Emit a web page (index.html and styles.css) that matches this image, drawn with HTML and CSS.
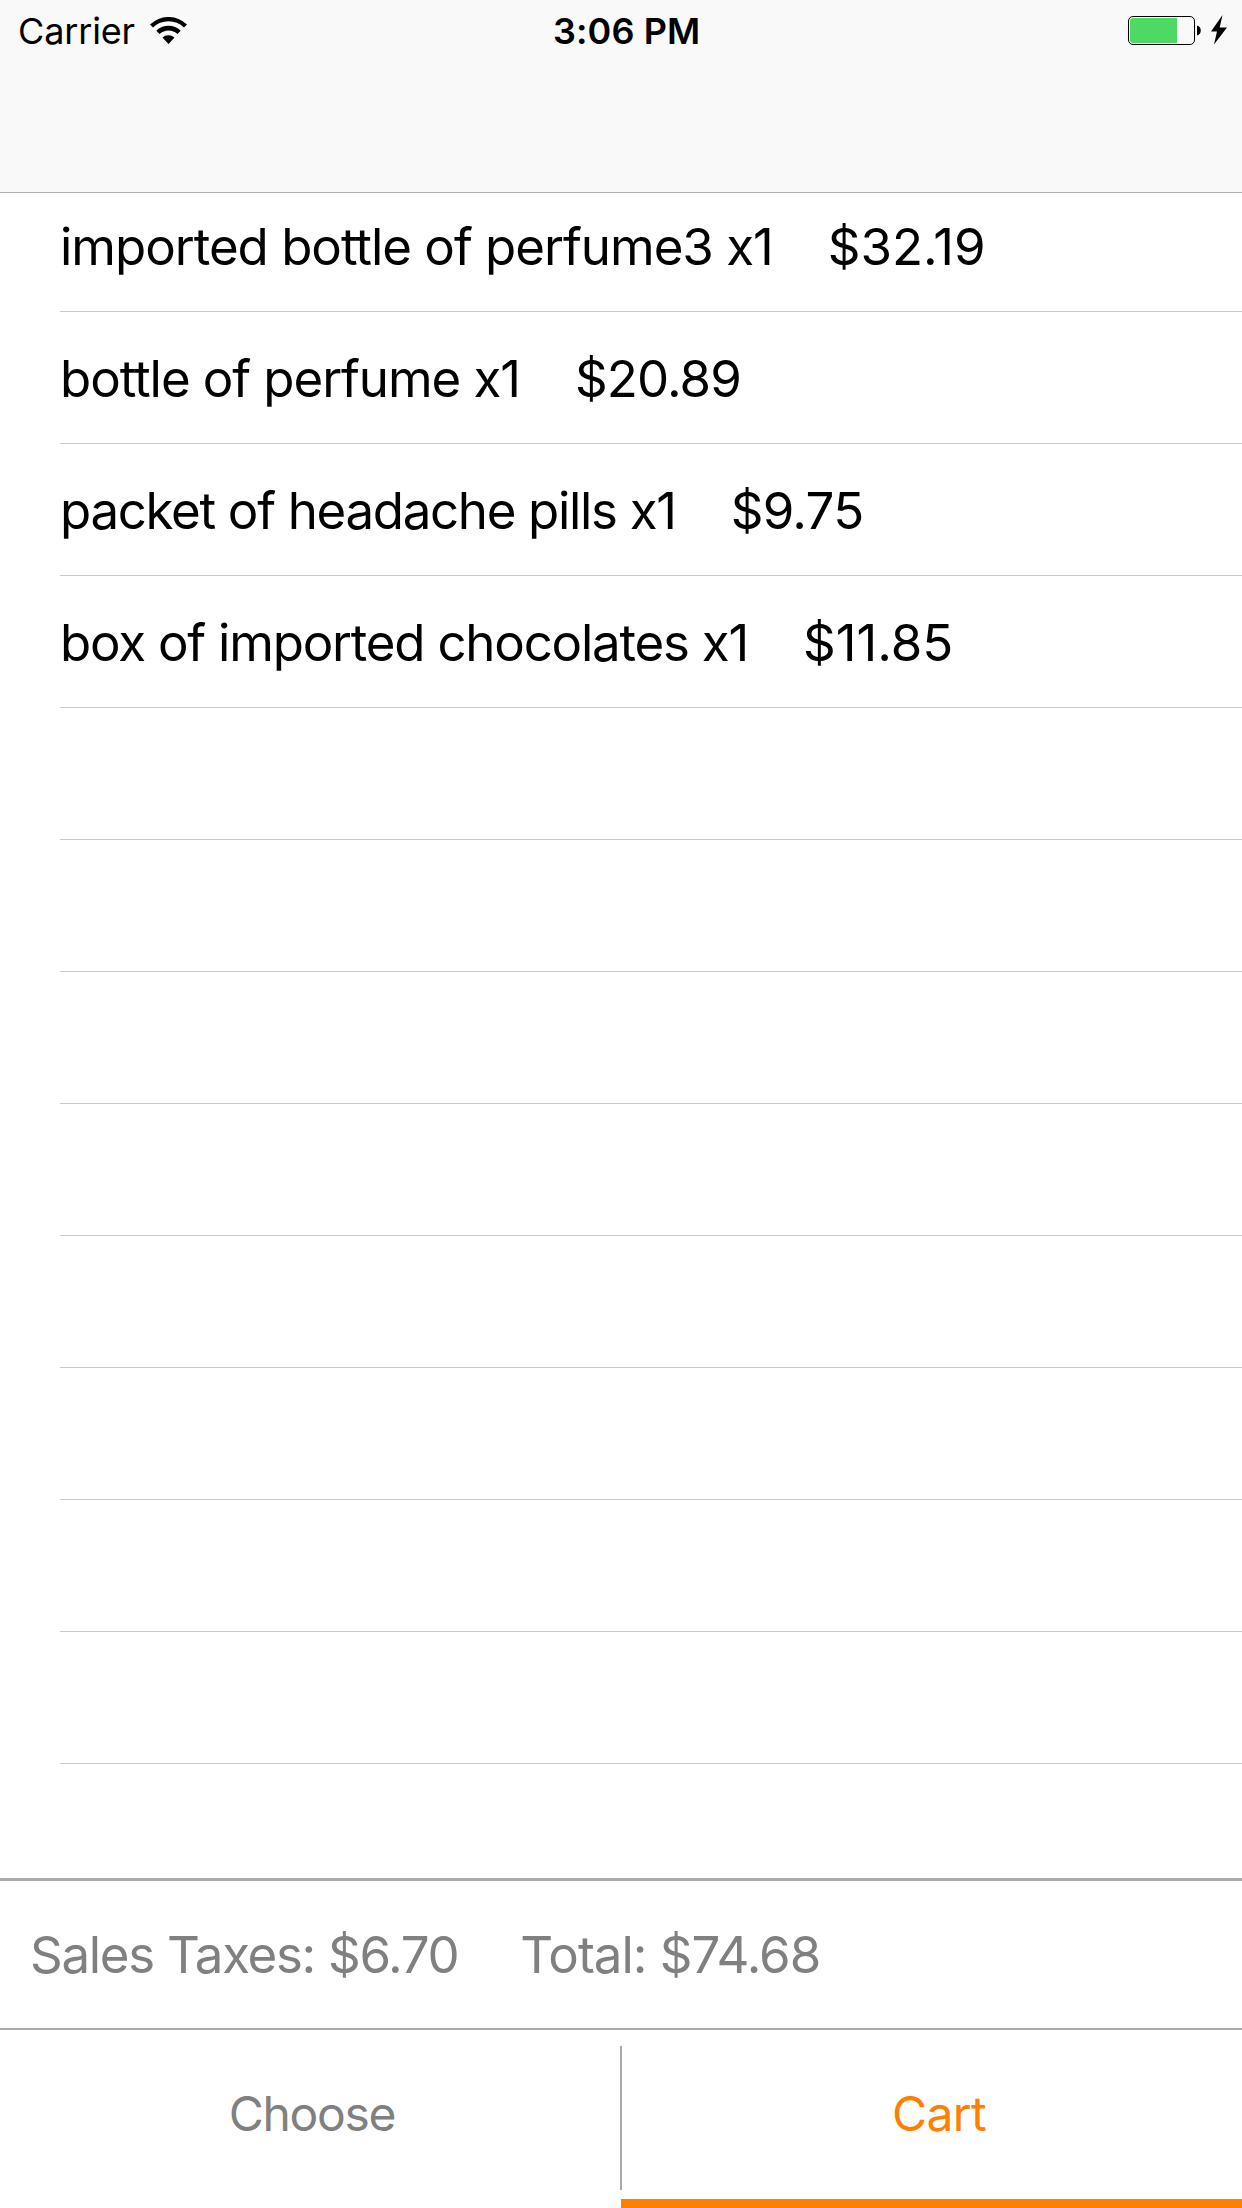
FILE: index.html
```html
<!DOCTYPE html>
<html lang="en">
<head>
<meta charset="utf-8">
<title>Cart</title>
<link rel="stylesheet" href="styles.css">
</head>
<body>
<header class="navbar">
  <div class="status">
    <div class="carrier"><span class="label carrier-name">Carrier</span>
      <svg class="wifi" width="37" height="27" viewBox="0 0 37 27"><path d="M0 7.500A26.500 26.500 0 0 1 37 7.500L34 10.500A22.300 22.300 0 0 0 3 10.500ZM6.300 13.700A17.500 17.500 0 0 1 30.700 13.700L27.500 17A13 13 0 0 0 9.500 17ZM12.500 20.500A9 9 0 0 1 24.500 20.500L18.500 27Z"/></svg>
    </div>
    <span class="label time">3:06 PM</span>
    <svg class="battery" width="99" height="30" viewBox="0 0 99 30"><rect x=".5" y="1.500" width="66" height="28" rx="4.500" fill="none" stroke="#000"/><path fill="#4cd964" d="M5 3H49V28H5a3 3 0 0 1-3-3V6a3 3 0 0 1 3-3Z"/><path d="M69 10.500c5 1 5 9 0 10Z"/><path d="M94.500 0L83 16.500h6L86 29.500 99 12.500h-7.300Z"/></svg>
  </div>
</header>
<main class="list">
  <div class="row"><span class="label i1">imported bottle of perfume3 x1</span><span class="label p1">$32.19</span></div>
  <div class="row"><span class="label i2">bottle of perfume x1</span><span class="label p2">$20.89</span></div>
  <div class="row"><span class="label i3">packet of headache pills x1</span><span class="label p3">$9.75</span></div>
  <div class="row"><span class="label i4">box of imported chocolates x1</span><span class="label p4">$11.85</span></div>
  <div class="row"></div><div class="row"></div><div class="row"></div><div class="row"></div>
  <div class="row"></div><div class="row"></div><div class="row"></div><div class="row"></div>
</main>
<section class="summary"><span class="label tax">Sales Taxes: $6.70</span><span class="label total">Total: $74.68</span></section>
<nav class="tabs"><a class="tab choose"><span class="label">Choose</span></a><i class="divider"></i><a class="tab active"><span class="label">Cart</span></a></nav>
</body>
</html>
```
FILE: styles.css
```css
* { box-sizing: border-box; }
body { margin: 0; width: 1242px; height: 2208px; display: flex; flex-direction: column; background: #fff; color: #000; font-family: Inter, sans-serif; font-feature-settings: "calt" 0; overflow: hidden; }
.label { white-space: pre; }
.navbar { height: 193px; flex: none; background: #f9f9f9; border-bottom: 1px solid #b2b2b2; }
.status { height: 60px; padding: 0 15px 0 18px; display: grid; grid-template-columns: 535px auto 1fr; align-items: center; font-size: 36px; }
.carrier { display: flex; align-items: center; gap: 15px; }
.carrier-name { letter-spacing: -.15px; padding-top: 2px; }
.time { font-weight: 600; padding-top: 2px; letter-spacing: .1px; }
.battery { justify-self: end; }
.list { flex: 1; min-height: 0; overflow: hidden; padding-left: 60px; margin-top: -13px; }
.row { height: 132px; padding-top: 2px; display: flex; align-items: center; border-bottom: 1px solid #c8c7cc; font-size: 51px; gap: 55px; }
.i1 { letter-spacing: -1.02px; }
.i2 { letter-spacing: -1.08px; }
.i3 { letter-spacing: -1.32px; }
.i4 { letter-spacing: -1.22px; }
.p2 { letter-spacing: -.9px; }
.p3 { letter-spacing: -.7px; }
.summary { height: 152px; flex: none; padding-bottom: 1px; border-top: 3px solid #aaa; border-bottom: 2px solid #aaa; display: flex; align-items: center; padding-left: 30px; gap: 62px; font-size: 51px; color: #808080; }
.tax { letter-spacing: -1.3px; }
.total { letter-spacing: -1px; }
.tabs { height: 178px; flex: none; display: grid; grid-template-columns: 620px 1px 1fr; font-size: 48px; color: #808080; }
.tab { display: flex; align-items: center; justify-content: center; }
.choose { padding: 0 0 11px 4px; letter-spacing: -1.3px; }
.divider { width: 2px; height: 144px; margin-top: 16px; background: #aaa; }
.active { padding: 0 0 2px 15px; letter-spacing: -.6px; color: #ff8000; border-bottom: 9px solid #ff8000; }
```
